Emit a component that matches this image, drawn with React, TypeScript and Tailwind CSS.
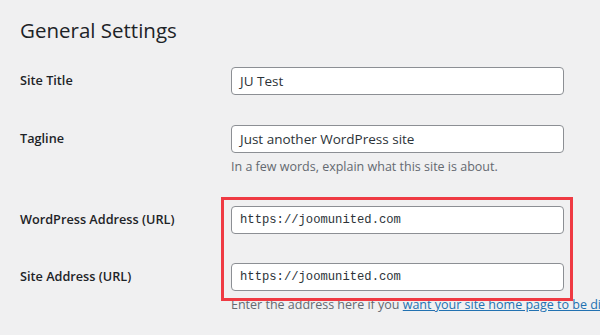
import React from "react";

const Field = ({ label, value, mono, note }: { label: string; value: string; mono?: boolean; note?: React.ReactNode }) => {
  return (
    <div className="flex py-[15px]">
      <div className="w-[211px] h-[28px] flex items-center text-[12.7px] font-semibold text-[#1d2327] shrink-0">
        {label}
      </div>
      <div className="flex flex-col">
        <div
          className={
            "w-[333px] h-[28px] bg-white border border-[#8c8f94] rounded-[4px] flex items-center px-[8px] text-[#2c3338] " +
            (mono ? "font-['Liberation_Mono',monospace] text-[12.2px]" : "text-[13.5px]")
          }
        >
          {value}
        </div>
        {note && (
          <div className="mt-[5px] text-[12.5px] leading-[18px] text-[#646970] whitespace-nowrap">{note}</div>
        )}
      </div>
    </div>
  );
};

export default function App() {
  return (
    <div className="w-[600px] h-[335px] bg-[#f0f0f1] overflow-hidden font-['Open_Sans','Noto_Sans',sans-serif]">
      <div className="relative px-[20px]">
        <h1 className="pt-[15px] text-[20.5px] leading-[30px] text-[#1d2327] font-normal h-[52px]">
          General Settings
        </h1>
        <Field label="Site Title" value="JU Test" />
        <Field
          label="Tagline"
          value="Just another WordPress site"
          note="In a few words, explain what this site is about."
        />
        <Field label="WordPress Address (URL)" value="https://joomunited.com" mono />
        <div className="-mt-[1px]">
          <Field
            label="Site Address (URL)"
            value="https://joomunited.com"
            mono
            note={
              <>
                Enter the address here if you{" "}
                <span className="text-[#2271b1] underline">want your site home page to be different from your WordPress installation directory</span>
              </>
            }
          />
        </div>
        <div className="absolute left-[221px] top-[197px] w-[352px] h-[104px] border-[3px] border-[#ef3a43] pointer-events-none" />
      </div>
    </div>
  );
}
